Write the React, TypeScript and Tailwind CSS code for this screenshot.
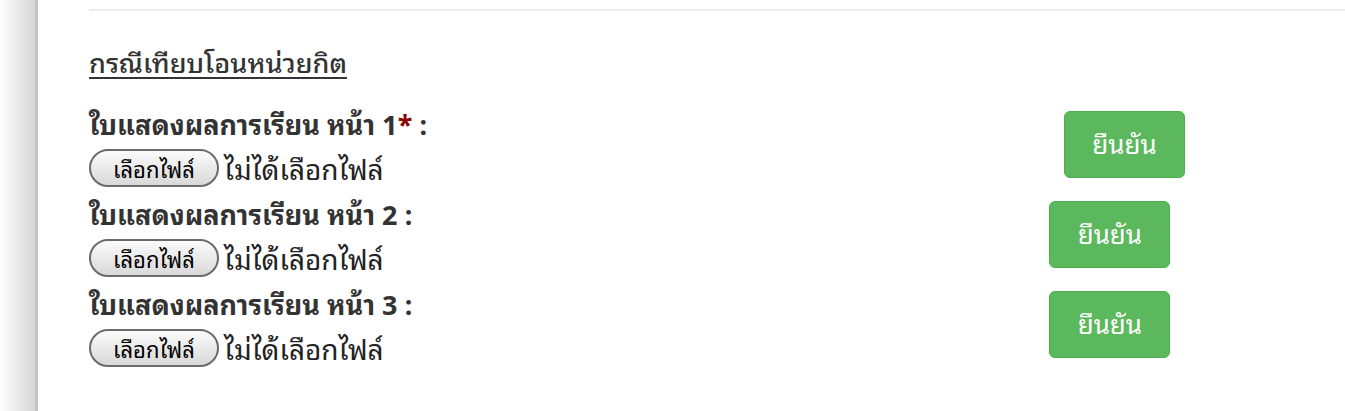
import React from 'react';

const rows = [
  { page: 1, required: true },
  { page: 2, required: false },
  { page: 3, required: false },
];

function FileInput() {
  return (
    <div className="flex items-center h-[50px]">
      <span className="inline-flex h-[38px] w-[130px] items-center justify-center rounded-full border-2 border-[#6b6b6b] bg-gradient-to-b from-[#fbfbfb] to-[#d9d9d9] text-[22px] leading-none text-black">
        เลือกไฟล์
      </span>
      <span className="ml-[5px] text-[28px] leading-none text-[#222]">ไม่ได้เลือกไฟล์</span>
    </div>
  );
}

export default function App() {
  return (
    <div
      className="flex h-[411px] w-[1345px] overflow-hidden bg-white"
      style={{ fontFamily: '"Noto Sans Thai Looped", "Noto Sans Thai", "Noto Sans", sans-serif' }}
    >
      {/* left shadow strip */}
      <div className="flex h-full w-[40px] shrink-0">
        <div className="h-full w-[35px] bg-gradient-to-r from-white to-[#d6d6d6]" />
        <div className="h-full w-[3px] bg-[#c4c4c4]" />
      </div>

      <div className="flex-1 pl-[49px] pt-[9px]">
        <div className="h-[2px] w-full bg-[#eeeeee]" />

        <h3 className="mt-[34px] text-[27px] font-medium leading-[32px] text-[#333] underline underline-offset-[4px]">
          กรณีเทียบโอนหน่วยกิต
        </h3>

        <div className="mt-[26px]">
          {rows.map((r) => (
            <div key={r.page} className="flex items-start h-[90px]">
              <div>
                <div className="h-[40px] text-[27px] font-bold leading-[40px] text-[#333]">
                  ใบแสดงผลการเรียน หน้า {r.page}
                  {r.required && <span className="text-[#8b0000]">*</span>}
                  {' '}:
                </div>
                <FileInput />
              </div>
              <button className="ml-[637px] mt-[8px] h-[67px] w-[121px] rounded-[6px] border border-[#4cae4c] bg-[#5cb85c] pb-[4px] text-[26px] text-white">
                ยืนยัน
              </button>
            </div>
          ))}
        </div>
      </div>
    </div>
  );
}
